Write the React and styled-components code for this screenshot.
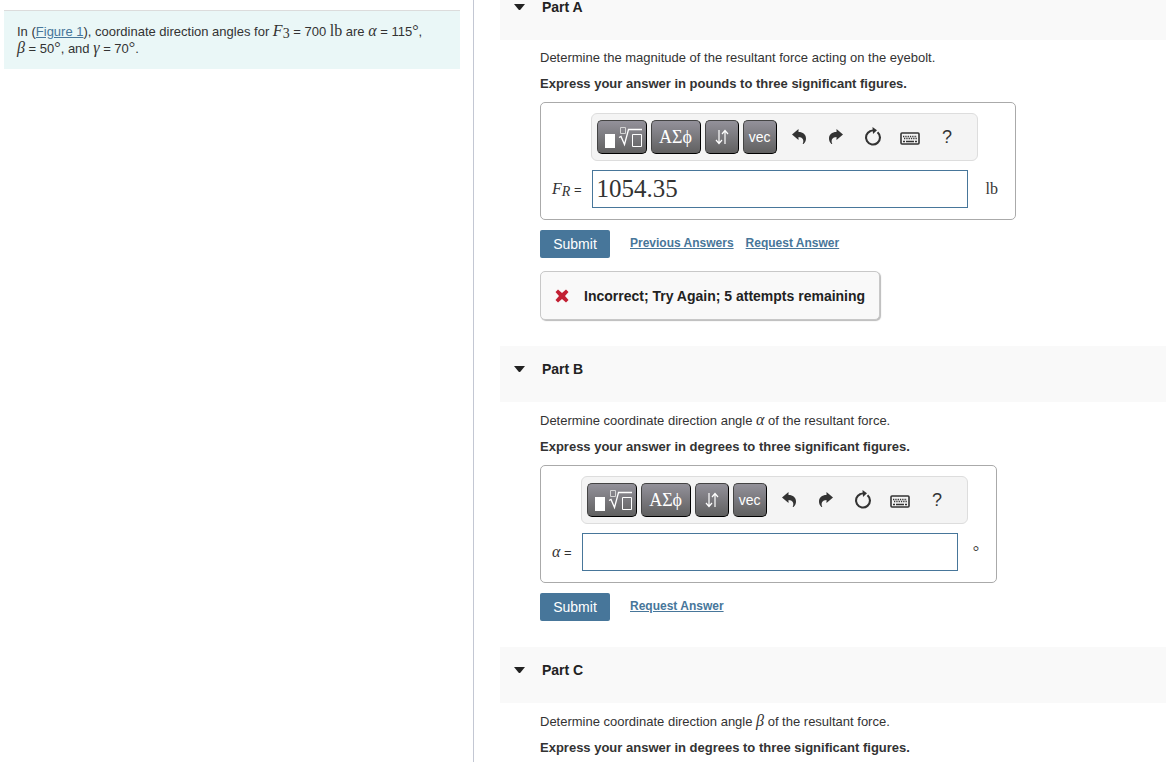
import React, { useState } from 'react'
import styled, { createGlobalStyle } from 'styled-components'

const GlobalStyle = createGlobalStyle`
  * {
    box-sizing: border-box;
  }
  body {
    margin: 0;
    background: #fff;
    color: #333;
    font-family: "Liberation Sans", Arial, sans-serif;
    font-size: 13px;
    line-height: 16px;
  }
`
const Page = styled.div`
  display: grid;
  grid-template-columns: minmax(200px, 474px) minmax(540px, 1fr);
  height: 100vh;
  overflow: hidden;
`
const Side = styled.aside`
  padding: 10px 13px 0 4px;
  border-right: 1px solid #c3c7d3;
`
const Intro = styled.div`
  padding: 12px 13px;
  background: #eaf7f7;
  border-top: 1px solid #dcdcdc;
`
const Statement = styled.p`
  margin: 0;
`
const Link = styled.a`
  color: #47769a;
  font-size: ${(props) => (props.$bold ? '12px' : '13px')};
  font-weight: ${(props) => (props.$bold ? 'bold' : 'normal')};
`
const Nowrap = styled.span`
  white-space: nowrap;
`
const Sym = styled.i`
  font-family: "Liberation Serif", "Times New Roman", serif;
  font-size: 16px;
  line-height: 16px;
`
const Roman = styled(Sym)`
  font-style: normal;
`
const Sub = styled.sub`
  font-size: 14px;
  line-height: 0;
  font-style: ${(props) => (props.$roman ? 'normal' : 'italic')};
  vertical-align: -2px;
`
const Main = styled.main`
  margin-top: -16px;
  padding-left: 26px;
`
const PartHeader = styled.header`
  height: 56px;
  padding: 15px 14px;
  background: #f9f9f9;
`
const Toggle = styled.button`
  display: flex;
  align-items: center;
  gap: 17px;
  padding: 0;
  border: 0;
  background: none;
  color: #222;
  font: bold 14px/16px "Liberation Sans", Arial, sans-serif;
  cursor: pointer;
`
const PartBody = styled.div`
  padding: 10px 16px 26px 40px;
`
const Text = styled.p`
  margin: 0 0 10px;
  font-weight: ${(props) => (props.$bold ? 'bold' : 'normal')};
`
const AnswerBox = styled.div`
  display: inline-grid;
  grid-template-columns: auto 387px auto;
  row-gap: 9px;
  align-items: center;
  padding: 10px 17px 11px 11px;
  border: 1px solid #aaa;
  border-radius: 5px;
  vertical-align: top;
`
const Toolbar = styled.div`
  grid-column: 2;
  display: flex;
  align-items: center;
  gap: 4px;
  height: 48px;
  padding: 0 5px;
  background: #f4f4f4;
  border: 1px solid #ddd;
  border-radius: 6px;
`
const DarkButton = styled.button`
  display: flex;
  align-items: center;
  justify-content: center;
  width: ${(props) => (props.$wide ? '50px' : '34px')};
  height: 34px;
  padding: 0;
  color: #fff;
  background: linear-gradient(#93919a, #606060);
  border: 1px solid #000;
  border-top-color: #444;
  border-left-color: #444;
  border-radius: 5px;
  font-family: ${(props) => (props.$serif ? '"Liberation Serif", serif' : '"Liberation Sans", sans-serif')};
  font-size: ${(props) => (props.$serif ? '18px' : '14px')};
  cursor: pointer;
`
const Tools = styled.div`
  display: flex;
`
const IconButton = styled.button`
  display: flex;
  align-items: center;
  justify-content: center;
  width: 37px;
  height: 34px;
  padding: 0;
  border: 0;
  background: none;
  color: #333;
  font: 18px "Liberation Sans", Arial, sans-serif;
  cursor: pointer;
`
const Label = styled.label`
  grid-column: 1;
  padding-right: 9px;
  white-space: nowrap;
`
const Answer = styled.input`
  width: 376px;
  height: 38px;
  margin-left: 1px;
  padding: 0 4px;
  border: 1px solid #47769a;
  border-radius: 0;
  background: #fff;
  color: #333;
  font: 25px "Liberation Serif", "Times New Roman", serif;
`
const Unit = styled.span`
  padding-left: ${(props) => (props.$narrow ? '5px' : '8px')};
  text-align: center;
`
const Actions = styled.div`
  display: flex;
  gap: 12px;
  margin-top: 10px;
  line-height: 26px;
`
const Submit = styled.button`
  width: 70px;
  height: 28px;
  margin-right: 8px;
  padding: 0;
  color: #fff;
  background: #47769a;
  border: 0;
  border-radius: 2px;
  font: 14px "Liberation Sans", Arial, sans-serif;
  cursor: pointer;
`
const Feedback = styled.div`
  display: flex;
  align-items: center;
  gap: 15px;
  width: fit-content;
  height: 49px;
  margin-top: 13px;
  padding: 0 14px;
  color: #222;
  background: #f9f9f9;
  border: 1px solid #c8c8c8;
  border-radius: 5px;
  box-shadow: 1px 1px 1px #bbb;
  font-size: 14px;
  font-weight: bold;
`

const Caret = () => (
  <svg width="11" height="6" viewBox="0 0 11 6">
    <path d="M0 0h11L6.5 5.4q-1 1-2 0z" fill="#222" />
  </svg>
)
const TemplateIcon = () => (
  <svg width="40" height="24" viewBox="0 0 40 24" fill="none" stroke="#fff">
    <path d="M3 9h10v14H3z" fill="#fff" stroke="none" />
    <path d="M18.500 2.500h5v6h-5z" stroke="#d5d5d5" />
    <path d="M17 12.500l2-1 3.500 8L26.500 4.500H40" strokeWidth="1.300" />
    <path d="M30.500 9.500h9v12h-9z" />
  </svg>
)
const ArrowsIcon = () => (
  <svg width="16" height="18" viewBox="0 0 16 18" fill="none" stroke="#fff" strokeWidth="1.200">
    <path d="M5 2v13M2 12l3 3.500L8 12M11 16V3M8 6l3-3.500L14 6" />
  </svg>
)
const UndoPath = 'M0 5.500L6.500 0v3C11 3 14 5.500 14 9.500c0 2-.8 4-2.500 5.500h-.8C12.500 11 10.500 8 6.500 8V11z'
const UndoIcon = () => (
  <svg width="14" height="16" viewBox="0 0 14 16">
    <path d={UndoPath} fill="currentColor" />
  </svg>
)
const RedoIcon = () => (
  <svg width="14" height="16" viewBox="0 0 14 16">
    <path d={UndoPath} fill="currentColor" transform="matrix(-1 0 0 1 14 0)" />
  </svg>
)
const ResetIcon = () => (
  <svg width="18" height="20" viewBox="0 0 18 20">
    <path d="M13.500 5.200A7 7 0 1 1 6.500 4" fill="none" stroke="currentColor" strokeWidth="2.100" />
    <path d="M8.500 0l4.500 3.200-4 3.800z" fill="currentColor" />
    <path d="M6 4.200l4-1" stroke="currentColor" strokeWidth="1.800" />
  </svg>
)
const KeyboardIcon = () => (
  <svg width="20" height="18" viewBox="0 0 20 18" fill="none" stroke="currentColor">
    <rect x="1" y="5" width="18" height="11" rx="1" strokeWidth="1.600" />
    <path d="M3 8.500h14M4 10.500h13" strokeWidth="1.500" strokeDasharray="1.300 1" />
    <path d="M3 13.500h2M6 13.500h8M15 13.500h2" strokeWidth="1.400" />
  </svg>
)
const WrongIcon = () => (
  <svg width="14" height="14" viewBox="0 0 14 14">
    <path d="M3 0.500L7 4l4-3.500L13.500 3 10 7l3.500 4L11 13.500 7 10l-4 3.500L.5 11 4 7 .5 3z" fill="#c22033" />
  </svg>
)

const MathToolbar = () => (
  <Toolbar role="toolbar">
    <DarkButton type="button" $wide aria-label="Templates"><TemplateIcon /></DarkButton>
    <DarkButton type="button" $wide $serif>ΑΣϕ</DarkButton>
    <DarkButton type="button" aria-label="Arrows"><ArrowsIcon /></DarkButton>
    <DarkButton type="button">vec</DarkButton>
    <Tools>
      <IconButton type="button" aria-label="Undo"><UndoIcon /></IconButton>
      <IconButton type="button" aria-label="Redo"><RedoIcon /></IconButton>
      <IconButton type="button" aria-label="Reset"><ResetIcon /></IconButton>
      <IconButton type="button" aria-label="Keyboard shortcuts"><KeyboardIcon /></IconButton>
      <IconButton type="button">?</IconButton>
    </Tools>
  </Toolbar>
)

const AnswerField = ({ id, label, unit, narrow, initial }) => {
  const [value, setValue] = useState(initial)
  return (
    <AnswerBox>
      <MathToolbar />
      <Label htmlFor={id}>{label} =</Label>
      <Answer id={id} type="text" value={value} onChange={(event) => setValue(event.target.value)} />
      <Unit $narrow={narrow}><Roman>{unit}</Roman></Unit>
    </AnswerBox>
  )
}

const Part = ({ title, children }) => (
  <section>
    <PartHeader>
      <Toggle type="button"><Caret />{title}</Toggle>
    </PartHeader>
    <PartBody>{children}</PartBody>
  </section>
)

const App = () => {
  return (
    <>
      <GlobalStyle />
      <Page>
        <Side>
          <Intro>
            <Statement>
              In (<Link href="#figure1">Figure 1</Link>), coordinate direction angles for{' '}
              <Nowrap><Sym>F<Sub $roman>3</Sub></Sym> = 700 <Roman>lb</Roman></Nowrap> are{' '}
              <Nowrap><Sym>α</Sym> = 115<Roman>°</Roman>,</Nowrap>{' '}
              <Nowrap><Sym>β</Sym> = 50<Roman>°</Roman>,</Nowrap> and{' '}
              <Nowrap><Sym>γ</Sym> = 70<Roman>°</Roman>.</Nowrap>
            </Statement>
          </Intro>
        </Side>
        <Main>
          <Part title="Part A">
            <Text>Determine the magnitude of the resultant force acting on the eyebolt.</Text>
            <Text $bold>Express your answer in pounds to three significant figures.</Text>
            <AnswerField id="fr" label={<Sym>F<Sub>R</Sub></Sym>} unit="lb" initial="1054.35" />
            <Actions>
              <Submit type="button">Submit</Submit>
              <Link $bold href="#previous">Previous Answers</Link>
              <Link $bold href="#request">Request Answer</Link>
            </Actions>
            <Feedback role="status"><WrongIcon />Incorrect; Try Again; 5 attempts remaining</Feedback>
          </Part>
          <Part title="Part B">
            <Text>Determine coordinate direction angle <Sym>α</Sym> of the resultant force.</Text>
            <Text $bold>Express your answer in degrees to three significant figures.</Text>
            <AnswerField id="alpha" label={<Sym>α</Sym>} unit="°" narrow initial="" />
            <Actions>
              <Submit type="button">Submit</Submit>
              <Link $bold href="#request">Request Answer</Link>
            </Actions>
          </Part>
          <Part title="Part C">
            <Text>Determine coordinate direction angle <Sym>β</Sym> of the resultant force.</Text>
            <Text $bold>Express your answer in degrees to three significant figures.</Text>
          </Part>
        </Main>
      </Page>
    </>
  )
}

export default App
